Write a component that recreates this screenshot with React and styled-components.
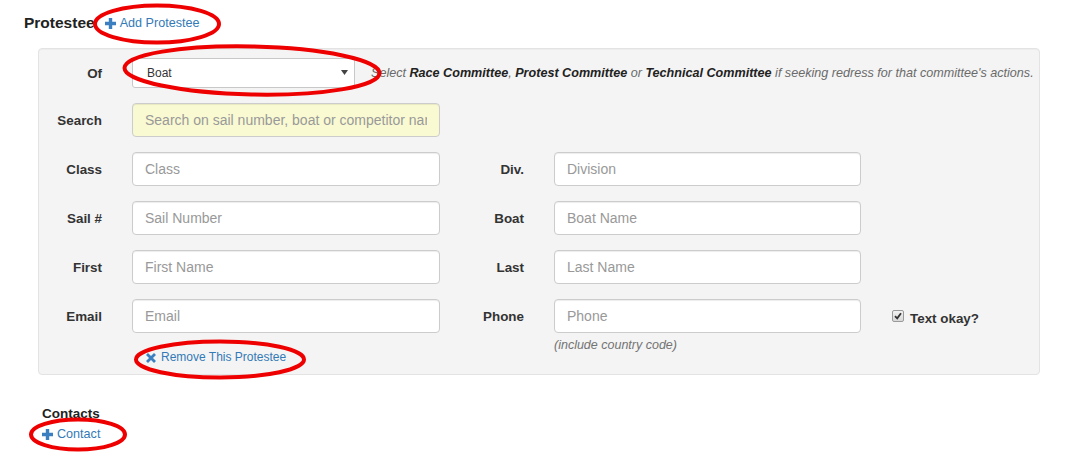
import React from 'react';
import styled, { createGlobalStyle } from 'styled-components';

const GlobalStyle = createGlobalStyle`
  body {
    margin: 0;
    background: #fff;
    font-family: 'Liberation Sans', Arial, sans-serif;
    color: #333;
  }
`;

// Page wrapper, relative so the red markup can sit over it
const Page = styled.div`
  position: relative;
  width: 1067px;
  height: 456px;
  box-sizing: border-box;
  padding: 13px 27px 0 24px;
`;

const HeadRow = styled.div`
  display: flex;
  align-items: center;
  height: 20px;
  gap: 10px;
`;

const Heading = styled.h3`
  margin: 0;
  font-size: 15.5px;
  font-weight: bold;
  line-height: 20px;
  color: #222;
`;

const Link = styled.a`
  display: inline-flex;
  align-items: center;
  gap: ${(p) => p.$gap || 4}px;
  font-size: ${(p) => p.$size || 12.5}px;
  line-height: ${(p) => p.$lh || 20}px;
  color: #337ab7;
  text-decoration: none;
  cursor: pointer;
  margin-top: ${(p) => p.$mt || 0}px;
  margin-left: ${(p) => p.$ml || 0}px;
`;

// Grey well holding the protestee form
const Well = styled.div`
  margin: 15px 0 0 14px;
  background: #f4f4f4;
  border: 1px solid #e3e3e3;
  border-radius: 4px;
  padding: 9px 0 8px 0;
  box-shadow: inset 0 1px 1px rgba(0, 0, 0, 0.03);
`;

const OfRow = styled.div`
  display: flex;
  align-items: center;
  margin-bottom: 15px;
`;

const Label = styled.label`
  display: block;
  box-sizing: border-box;
  width: ${(p) => (p.$width ? `${p.$width}px` : 'auto')};
  padding-right: 30px;
  padding-top: ${(p) => (p.$inline ? 2 : 8)}px;
  text-align: right;
  font-size: 13.4px;
  font-weight: bold;
  line-height: 20px;
  color: #333;
`;

const SelectWrap = styled.div`
  position: relative;
  width: 223px;
  height: 30px;
`;

const Select = styled.select`
  appearance: none;
  width: 100%;
  height: 100%;
  box-sizing: border-box;
  padding: 0 0 0 14px;
  border: 1px solid #c8c8c8;
  border-radius: 3px;
  background: #fff;
  font-family: 'Liberation Sans', Arial, sans-serif;
  font-size: 12px;
  color: #333;
  outline: none;
`;

const Caret = styled.svg`
  position: absolute;
  right: 7px;
  top: 12px;
  pointer-events: none;
`;

const Hint = styled.div`
  margin-left: 16px;
  font-size: 12.6px;
  font-style: italic;
  line-height: 18px;
  color: #6a6a6a;
  white-space: nowrap;

  b {
    color: #222;
  }
`;

const FieldGrid = styled.div`
  display: grid;
  grid-template-columns: 93px 308px 114px 307px 1fr;
  row-gap: 15px;
  align-items: start;
`;

const Cell = styled.div`
  display: flex;
  flex-direction: column;
  align-items: flex-start;
`;

const Input = styled.input`
  width: 100%;
  height: 34px;
  box-sizing: border-box;
  padding: 0 12px;
  border: 1px solid #ccc;
  border-radius: 4px;
  background: ${(p) => (p.$search ? '#fafad2' : '#fff')};
  font-family: 'Liberation Sans', Arial, sans-serif;
  font-size: 14px;
  color: #555;
  outline: none;
  box-shadow: inset 0 1px 1px rgba(0, 0, 0, 0.075);

  &::placeholder {
    color: #999;
  }
`;

const HelpBlock = styled.span`
  margin-top: 3px;
  font-size: 12.5px;
  font-style: italic;
  line-height: 18px;
  color: #737373;
`;

const CheckLabel = styled.label`
  display: flex;
  align-items: center;
  gap: 6px;
  margin: 9px 0 0 31px;
  height: 20px;
  font-size: 13.4px;
  font-weight: bold;
  color: #333;
`;

const CheckBox = styled.span`
  display: inline-flex;
  align-items: center;
  justify-content: center;
  width: 12px;
  height: 12px;
  box-sizing: border-box;
  border: 1px solid #9a9a9a;
  border-radius: 2px;
  background: linear-gradient(#f2f2f2, #d8d8d8);
  margin-top: -4px;
`;

const Contacts = styled.div`
  margin: 29px 0 0 18px;
  display: flex;
  flex-direction: column;
  align-items: flex-start;
`;

const SubHeading = styled.div`
  font-size: 13.5px;
  font-weight: bold;
  line-height: 20px;
  color: #222;
`;

const Markup = styled.svg`
  position: absolute;
  left: 0;
  top: 0;
  pointer-events: none;
`;

const PlusIcon = ({ size = 11 }) => (
  <svg width={size} height={size} viewBox="0 0 11 11">
    <path d="M3.8 0h3.4v3.8H11v3.4H7.2V11H3.8V7.2H0V3.8h3.8z" fill="#3b7fc0" />
  </svg>
);

const RemoveIcon = () => (
  <svg width="10" height="10" viewBox="0 0 10 10">
    <path d="M1 1L9 9M9 1L1 9" stroke="#3b7fc0" strokeWidth="2.8" />
  </svg>
);

const rows = [
  { l: 'Class', p: 'Class', l2: 'Div.', p2: 'Division' },
  { l: 'Sail #', p: 'Sail Number', l2: 'Boat', p2: 'Boat Name' },
  { l: 'First', p: 'First Name', l2: 'Last', p2: 'Last Name' },
];

export default function App() {
  return (
    <Page>
      <GlobalStyle />
      <HeadRow>
        <Heading>Protestee</Heading>
        <Link $size={12.6}>
          <PlusIcon />
          Add Protestee
        </Link>
      </HeadRow>

      <Well>
        <OfRow>
          <Label $width={93} $inline>Of</Label>
          <SelectWrap>
            <Select defaultValue="Boat">
              <option>Boat</option>
              <option>Race Committee</option>
              <option>Protest Committee</option>
              <option>Technical Committee</option>
            </Select>
            <Caret width="7" height="5" viewBox="0 0 7 5">
              <path d="M0 0h7L3.5 5z" fill="#444" />
            </Caret>
          </SelectWrap>
          <Hint>
            Select <b>Race Committee</b>, <b>Protest Committee</b> or <b>Technical Committee</b> if
            seeking redress for that committee's actions.
          </Hint>
        </OfRow>

        <FieldGrid>
          <Label>Search</Label>
          <Cell>
            <Input $search placeholder="Search on sail number, boat or competitor name" />
          </Cell>
          <div />
          <div />
          <div />

          {rows.map((r) => (
            <React.Fragment key={r.l}>
              <Label>{r.l}</Label>
              <Cell>
                <Input placeholder={r.p} />
              </Cell>
              <Label>{r.l2}</Label>
              <Cell>
                <Input placeholder={r.p2} />
              </Cell>
              <div />
            </React.Fragment>
          ))}

          <Label>Email</Label>
          <Cell>
            <Input placeholder="Email" />
            <Link $size={12} $lh={17} $mt={16} $ml={14} $gap={5}>
              <RemoveIcon />
              Remove This Protestee
            </Link>
          </Cell>
          <Label>Phone</Label>
          <Cell>
            <Input placeholder="Phone" />
            <HelpBlock>(include country code)</HelpBlock>
          </Cell>
          <CheckLabel>
            <CheckBox>
              <svg width="8" height="8" viewBox="0 0 8 8">
                <path d="M1 4.2L3.2 6.4L7 1.2" stroke="#333" strokeWidth="1.8" fill="none" />
              </svg>
            </CheckBox>
            Text okay?
          </CheckLabel>
        </FieldGrid>
      </Well>

      <Contacts>
        <SubHeading>Contacts</SubHeading>
        <Link $size={12.6}>
          <PlusIcon />
          Contact
        </Link>
      </Contacts>

      <Markup width="1067" height="456" viewBox="0 0 1067 456">
        <g fill="none" stroke="#ee0000" strokeWidth="4">
          <ellipse cx="157" cy="24" rx="62" ry="18.5" />
          <ellipse cx="252" cy="70.5" rx="127.5" ry="24" transform="rotate(1.2 252 70.5)" />
          <ellipse cx="220" cy="359.5" rx="84" ry="18" />
          <ellipse cx="78" cy="434.5" rx="47" ry="15" />
        </g>
      </Markup>
    </Page>
  );
}
